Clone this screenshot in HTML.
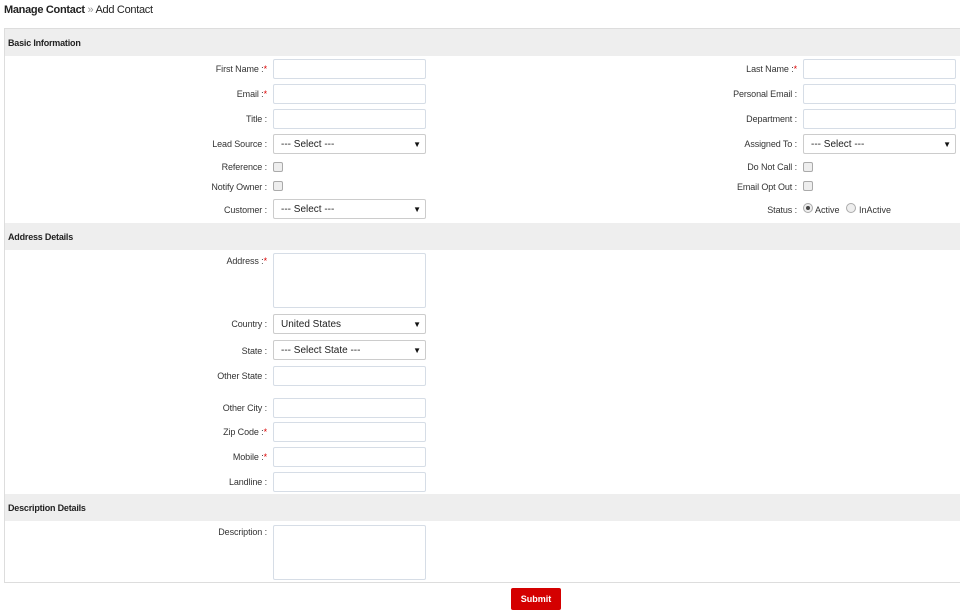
<!DOCTYPE html>
<html><head><meta charset="utf-8"><style>
*{box-sizing:border-box;margin:0;padding:0}
body{width:960px;height:610px;background:#fff;position:relative;overflow:hidden;font-family:"Liberation Sans",Arial,sans-serif;color:#333}
.a{position:absolute}
.bc{left:4px;top:4px;font-size:11px;color:#222;letter-spacing:-0.3px}
.bc b{font-weight:bold}
.box{left:4px;top:28px;width:960px;height:555px;border:1px solid #ddd}
.hd{left:5px;width:955px;height:27px;background:#eee;font-size:9px;font-weight:bold;color:#222;padding:9px 0 0 3px;letter-spacing:-0.2px}
.l{font-size:9px;text-align:right;width:200px;color:#333;letter-spacing:-0.1px}
.l i{color:#d00;font-style:normal}
.i{width:153px;height:20px;border:1px solid #d6dde6;border-radius:2px;background:#fff}
.s{width:153px;height:20px;border:1px solid #ccc;border-radius:2px;background:#fff;font-size:10px;color:#222;padding:4px 0 0 7px}
.s:after{content:"▼";position:absolute;right:4px;top:5px;font-size:8px;color:#111}
.c{width:10px;height:10px;border:1px solid #aaa;border-radius:2px;background:#eee}
.r{width:10px;height:10px;border:1px solid #aaa;border-radius:50%;background:#eee}
.t{font-size:9px;color:#333}
.btn{left:511px;top:588px;width:50px;height:22px;background:#d40000;color:#fff;font-size:9px;font-weight:bold;text-align:center;padding-top:6px;border-radius:2px}
</style></head><body>
<div class="a bc"><b>Manage Contact</b> <span style="color:#999">»</span> Add Contact</div>
<div class="a box"></div>
<div class="a hd" style="top:29px">Basic Information</div>
<div class="a hd" style="top:223px">Address Details</div>
<div class="a hd" style="top:494px">Description Details</div>

<div class="a l" style="left:67px;top:64px">First Name :<i>*</i></div><div class="a i" style="left:273px;top:59px"></div>
<div class="a l" style="left:67px;top:89px">Email :<i>*</i></div><div class="a i" style="left:273px;top:84px"></div>
<div class="a l" style="left:67px;top:114px">Title :</div><div class="a i" style="left:273px;top:109px"></div>
<div class="a l" style="left:67px;top:139px">Lead Source :</div><div class="a s" style="left:273px;top:134px">--- Select ---</div>
<div class="a l" style="left:67px;top:162px">Reference :</div><div class="a c" style="left:273px;top:162px"></div>
<div class="a l" style="left:67px;top:182px">Notify Owner :</div><div class="a c" style="left:273px;top:181px"></div>
<div class="a l" style="left:67px;top:205px">Customer :</div><div class="a s" style="left:273px;top:199px">--- Select ---</div>

<div class="a l" style="left:597px;top:64px">Last Name :<i>*</i></div><div class="a i" style="left:803px;top:59px"></div>
<div class="a l" style="left:597px;top:89px">Personal Email :</div><div class="a i" style="left:803px;top:84px"></div>
<div class="a l" style="left:597px;top:114px">Department :</div><div class="a i" style="left:803px;top:109px"></div>
<div class="a l" style="left:597px;top:139px">Assigned To :</div><div class="a s" style="left:803px;top:134px">--- Select ---</div>
<div class="a l" style="left:597px;top:162px">Do Not Call :</div><div class="a c" style="left:803px;top:162px"></div>
<div class="a l" style="left:597px;top:182px">Email Opt Out :</div><div class="a c" style="left:803px;top:181px"></div>
<div class="a l" style="left:597px;top:205px">Status :</div>
<div class="a r" style="left:803px;top:203px"><div style="width:4px;height:4px;border-radius:50%;background:#444;margin:2px 0 0 2px"></div></div>
<div class="a t" style="left:815px;top:205px">Active</div>
<div class="a r" style="left:846px;top:203px"></div>
<div class="a t" style="left:859px;top:205px">InActive</div>

<div class="a l" style="left:67px;top:256px">Address :<i>*</i></div><div class="a i" style="left:273px;top:253px;height:55px"></div>
<div class="a l" style="left:67px;top:319px">Country :</div><div class="a s" style="left:273px;top:314px">United States</div>
<div class="a l" style="left:67px;top:346px">State :</div><div class="a s" style="left:273px;top:340px">--- Select State ---</div>
<div class="a l" style="left:67px;top:371px">Other State :</div><div class="a i" style="left:273px;top:366px"></div>
<div class="a l" style="left:67px;top:403px">Other City :</div><div class="a i" style="left:273px;top:398px"></div>
<div class="a l" style="left:67px;top:427px">Zip Code :<i>*</i></div><div class="a i" style="left:273px;top:422px"></div>
<div class="a l" style="left:67px;top:452px">Mobile :<i>*</i></div><div class="a i" style="left:273px;top:447px"></div>
<div class="a l" style="left:67px;top:477px">Landline :</div><div class="a i" style="left:273px;top:472px"></div>

<div class="a l" style="left:67px;top:527px">Description :</div><div class="a i" style="left:273px;top:525px;height:55px"></div>

<div class="a btn">Submit</div>
</body></html>
